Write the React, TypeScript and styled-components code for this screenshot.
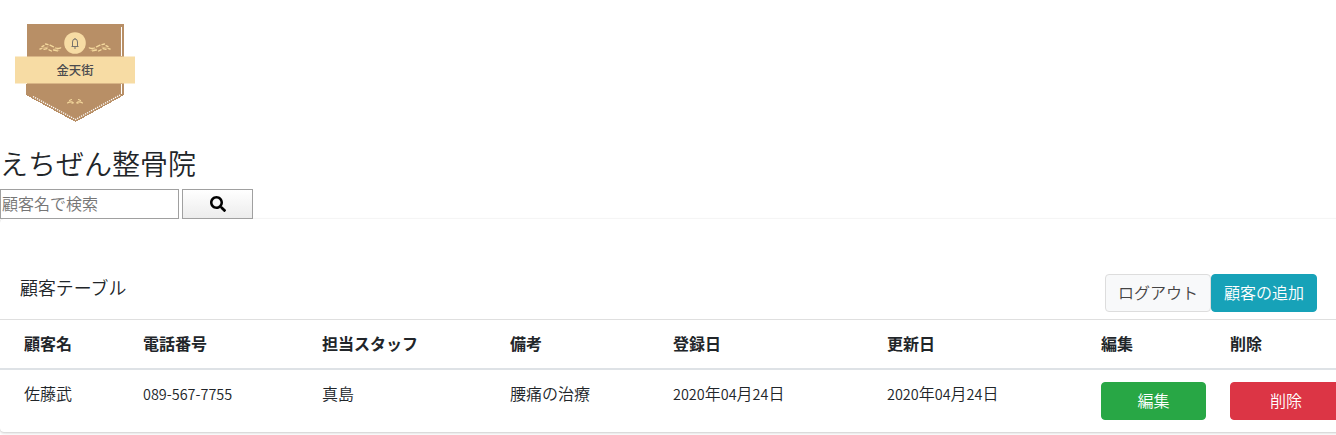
import React from "react";
import styled, { createGlobalStyle, css } from "styled-components";

const GlobalStyle = createGlobalStyle`
  *, *::before, *::after { box-sizing: border-box; }
  body {
    margin: 0;
    overflow: hidden;
    background: #fff;
    color: #212529;
    font-family: "Noto Sans CJK JP", sans-serif;
    font-size: 16px;
    font-weight: 350;
    line-height: 24px;
  }
`;

const Page = styled.div`
  width: 100%;
  overflow: hidden;
  height: 435px;
`;

const Logo = styled.svg`
  display: block;
  width: 150px;
  height: 145px;
`;

const Heading = styled.h1`
  margin: 0;
  height: 44px;
  font-size: 28px;
  font-weight: 350;
  line-height: 36px;
`;

const SearchForm = styled.form`
  display: flex;
  gap: 3px;
  height: 30px;
`;

const SearchInput = styled.input`
  width: 179px;
  height: 30px;
  flex: none;
  padding: 0 1px 2px;
  border: 1px solid #a0a0a0;
  border-radius: 0;
  outline: none;
  font: inherit;
  &::placeholder { color: #757575; opacity: 1; }
`;

const SearchButton = styled.button`
  display: flex;
  align-items: center;
  justify-content: center;
  width: 71px;
  height: 30px;
  flex: none;
  padding: 0;
  border: 1px solid #a0a0a0;
  border-radius: 0;
  background: linear-gradient(#fff, #ececec);
`;

const Card = styled.section`
  width: 1354px;
  height: 213px;
  border-radius: 4px;
  box-shadow: 0 0 1px rgba(0, 0, 0, 0.125), 0 1px 3px rgba(0, 0, 0, 0.2);
`;

const CardHeader = styled.header`
  display: flex;
  align-items: flex-start;
  justify-content: space-between;
  height: 101px;
  padding: 55px 37px 0 20px;
  border-bottom: 1px solid #dfdfdf;
`;

const CardTitle = styled.h2`
  margin: 0;
  font-size: 17.9px;
  font-weight: 350;
  line-height: 26px;
`;

const Actions = styled.div`
  display: flex;
`;

type Tone = "light" | "info" | "success" | "danger";

const tones = {
  light: css`background: #f8f9fa; border-color: #ddd; color: #444;`,
  info: css`background: #17a2b8; border-color: #17a2b8; color: #fff;`,
  success: css`background: #28a745; border-color: #28a745; color: #fff;`,
  danger: css`background: #dc3545; border-color: #dc3545; color: #fff;`,
};

const Button = styled.button<{ $tone: Tone; $wide?: boolean }>`
  display: block;
  height: 38px;
  width: ${(p) => (p.$wide ? "112px" : "106px")};
  padding: 0 0 2px;
  border: 1px solid;
  border-radius: 4px;
  font: inherit;
  white-space: nowrap;
  ${(p) => tones[p.$tone]}
`;

const EditButton = styled(Button)`
  width: 105px;
`;

const Table = styled.table`
  width: 1354px;
  table-layout: fixed;
  border-collapse: separate;
  border-spacing: 0;
`;

const HeadCell = styled.th`
  height: 50px;
  padding: 11px 12px 13px;
  border-bottom: 2px solid #dee2e6;
  font-weight: 700;
  text-align: left;
  vertical-align: top;
  &:first-child { padding-left: 24px; }
`;

const Cell = styled.td`
  height: 62px;
  padding: 11px 12px 0;
  vertical-align: top;
  white-space: nowrap;
  &:first-child { padding-left: 24px; }
`;

const ActionCell = styled(Cell)`
  padding-top: 12px;
`;

const Digits = styled.span`
  font-size: 14.45px;
`;

const columns = [
  { label: "顧客名", width: 131 },
  { label: "電話番号", width: 179 },
  { label: "担当スタッフ", width: 188 },
  { label: "備考", width: 163 },
  { label: "登録日", width: 214 },
  { label: "更新日", width: 214 },
  { label: "編集", width: 129 },
  { label: "削除", width: 136 },
];

const FormattedDate = ({ y, m, d }: { y: string; m: string; d: string }) => (
  <>
    <Digits>{y}</Digits>年<Digits>{m}</Digits>月<Digits>{d}</Digits>日
  </>
);

const Sprig = () => (
  <g fill="none" stroke="#f5d99d" strokeLinecap="round">
    <path d="M91 50.300q2.500-1.800 5-1.300M102 47q3 1 6 1.300" strokeWidth="0.600" />
    <path d="M89.300 47.800q3 1 5 .2M92.500 50.800l4-.8M98.500 51l2.500-1.200M96.500 46.800l3.500-1.600M102 44.700l2.500-.7M103 48.600l3 .8M106 45.700l2 1M108.500 48.700l1.500.3" strokeWidth="1.300" />
  </g>
);

const ShopLogo = () => (
  <Logo viewBox="0 0 150 145">
    <path d="M27 24H124V95L75.500 122L26 95V84H27Z" fill="#b88f66" shapeRendering="crispEdges" />
    <path d="M121.500 27V94" stroke="#fff" />
    <path d="M33 96.500L75.500 119.500L121 94.500" fill="none" stroke="#fff" strokeWidth="1.300" strokeDasharray="1.200 1.080" />
    <path d="M15 56.500H135V83.500H15Z" fill="#f7dca4" />
    <path d="M27 56.500H124M27 83.500H124" stroke="#d8b586" />
    <circle cx="75" cy="43" r="10.800" fill="#f7dca4" />
    <path d="M71.500 46.500h7M72.500 46v-4q0-3 2.500-3t2.500 3v4M75 38v1M74 48h2" fill="none" stroke="#77736d" strokeWidth="1" />
    <Sprig />
    <g transform="translate(150 0) scale(-1 1)"><Sprig /></g>
    <g fill="none" stroke="#f5d99d" strokeLinecap="round" strokeWidth="1.100">
      <path d="M67.500 103q2-1.500 5-1M69.500 100.500l2-1M72 103.300l1.500-.5M82.500 103q-2-1.500-5-1M80.500 100.500l-2-1M78 103.300l-1.500-.5" />
    </g>
    <text x="75" y="75.200" textAnchor="middle" fontSize="12.400" fontWeight="500" fill="#4b4b4f">金天街</text>
  </Logo>
);

export default function App() {
  return (
    <Page>
      <GlobalStyle />
      <ShopLogo />
      <Heading>えちぜん整骨院</Heading>
      <SearchForm>
        <SearchInput placeholder="顧客名で検索" />
        <SearchButton type="button" aria-label="検索">
          <svg width="16" height="16" viewBox="0 0 512 512">
            <path d="M505 442.700L405.300 343c-4.500-4.500-10.600-7-17-7H372c27.600-35.300 44-79.700 44-128C416 93.100 322.900 0 208 0S0 93.100 0 208s93.100 208 208 208c48.300 0 92.700-16.400 128-44v16.300c0 6.400 2.500 12.500 7 17l99.700 99.700c9.400 9.400 24.600 9.400 33.900 0l28.300-28.300c9.400-9.400 9.400-24.600.1-34zM208 336c-70.700 0-128-57.200-128-128 0-70.700 57.200-128 128-128 70.700 0 128 57.200 128 128 0 70.700-57.200 128-128 128z" />
          </svg>
        </SearchButton>
      </SearchForm>
      <Card>
        <CardHeader>
          <CardTitle>顧客テーブル</CardTitle>
          <Actions>
            <Button $tone="light">ログアウト</Button>
            <Button $tone="info">顧客の追加</Button>
          </Actions>
        </CardHeader>
        <Table>
          <colgroup>
            {columns.map((c) => <col key={c.label} width={c.width} />)}
          </colgroup>
          <thead>
            <tr>{columns.map((c) => <HeadCell key={c.label}>{c.label}</HeadCell>)}</tr>
          </thead>
          <tbody>
            <tr>
              <Cell>佐藤武</Cell>
              <Cell><Digits>089-567-7755</Digits></Cell>
              <Cell>真島</Cell>
              <Cell>腰痛の治療</Cell>
              <Cell><FormattedDate y="2020" m="04" d="24" /></Cell>
              <Cell><FormattedDate y="2020" m="04" d="24" /></Cell>
              <ActionCell><EditButton $tone="success">編集</EditButton></ActionCell>
              <ActionCell><Button $tone="danger" $wide>削除</Button></ActionCell>
            </tr>
          </tbody>
        </Table>
      </Card>
    </Page>
  );
}
